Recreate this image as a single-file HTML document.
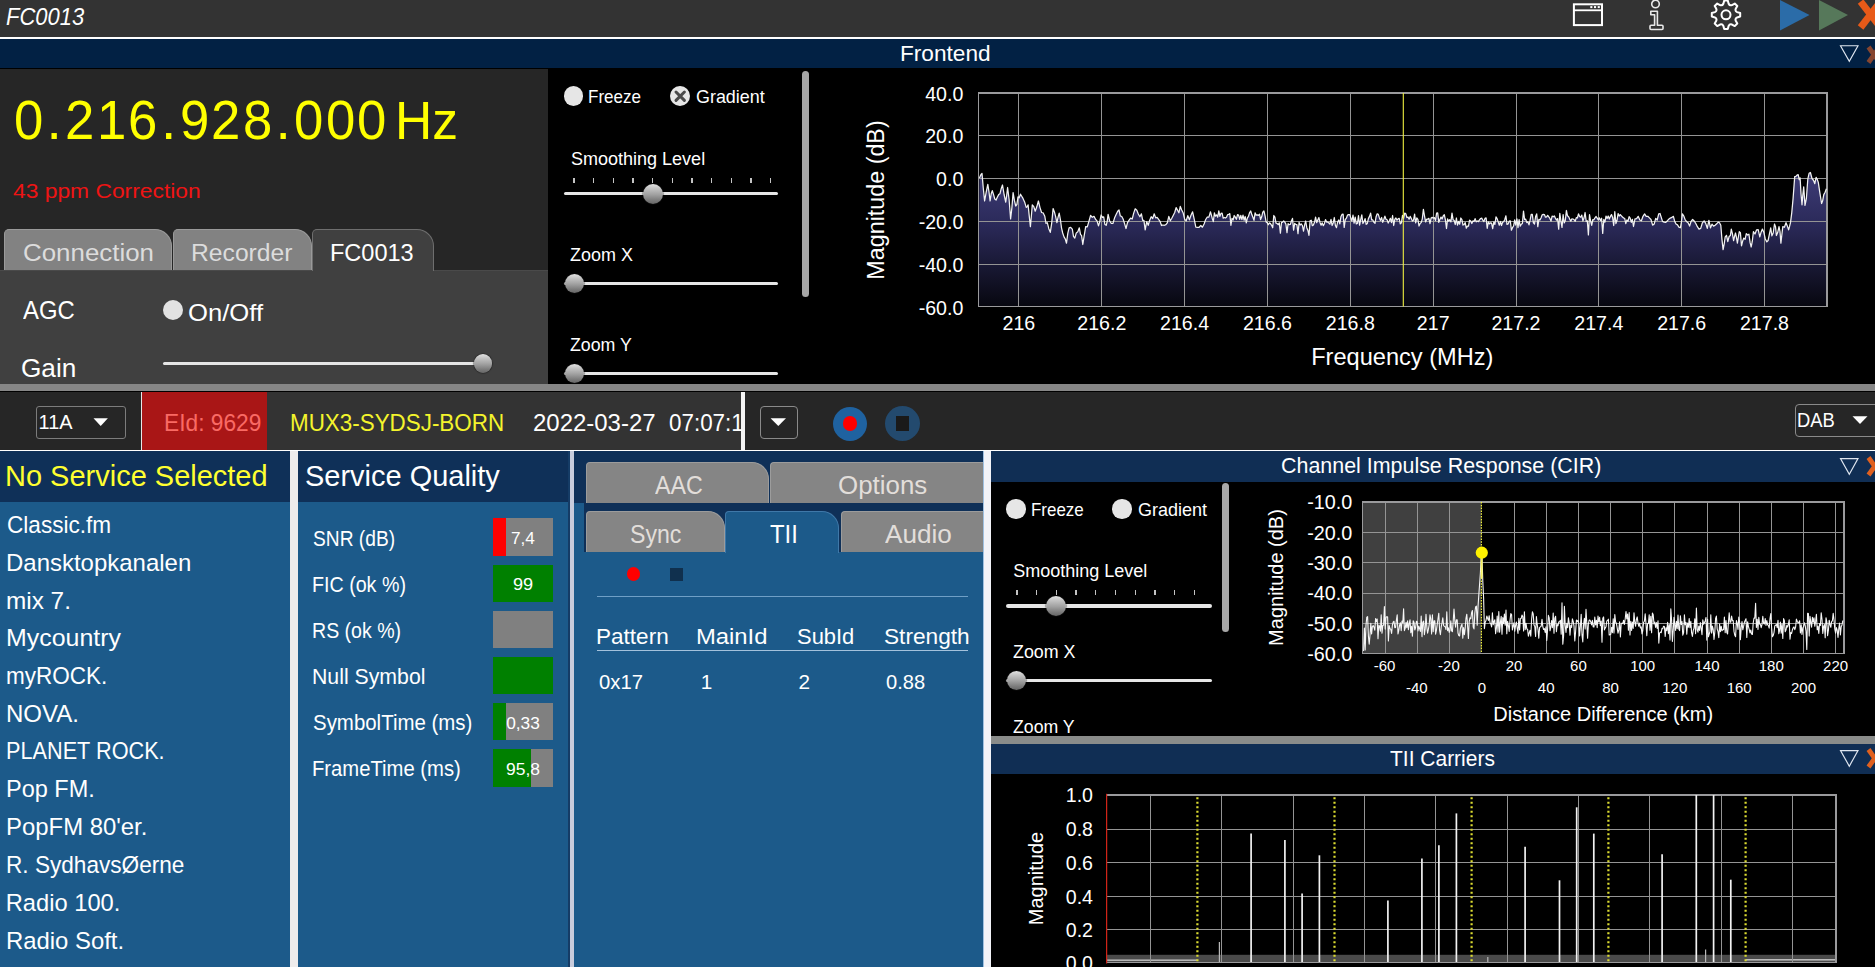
<!DOCTYPE html>
<html lang="en"><head><meta charset="utf-8"><title>FC0013</title>
<style>
html,body{margin:0;padding:0;background:#000;overflow:hidden;}
body{width:1875px;height:967px;position:relative;overflow:hidden;font-family:"Liberation Sans", sans-serif;}
.b{position:absolute;}
.t{position:absolute;white-space:nowrap;line-height:1;transform-origin:0 0;color:#fff;}
.fd{display:inline-block;width:31.45px;text-align:center;transform:scaleX(.955);}
.fp{display:inline-block;width:20.1px;text-align:center;}
svg text{font-family:"Liberation Sans", sans-serif;fill:#fff;}
</style></head><body>
<div class="b" style="left:0px;top:0px;width:1875px;height:38px;background:#333333;"></div>
<div class="b" style="left:0px;top:37px;width:1875px;height:2.1px;background:#ffffff;"></div>
<div class="b" style="left:0px;top:39.1px;width:1875px;height:29.4px;background:#022144;"></div>
<div class="b" style="left:0px;top:68.5px;width:548px;height:316px;background:#262626;"></div>
<div class="b" style="left:548px;top:68.5px;width:1327px;height:316px;background:#000;"></div>
<div class="b" style="left:0px;top:270px;width:548px;height:115px;background:#404040;border-top:1px solid #4a4a4a;"></div>
<div class="b" style="left:0px;top:383.8px;width:1875px;height:7.5px;background:#868686;"></div>
<div class="b" style="left:0px;top:391.5px;width:141px;height:58px;background:#262626;"></div>
<div class="b" style="left:141px;top:391.5px;width:1px;height:58px;background:#e8e8e8;"></div>
<div class="b" style="left:142px;top:391.5px;width:125px;height:58px;background:#a91616;"></div>
<div class="b" style="left:267px;top:391.5px;width:474px;height:58px;background:#333333;"></div>
<div class="b" style="left:741px;top:391.5px;width:4px;height:58px;background:#f4f4f4;"></div>
<div class="b" style="left:745px;top:391.5px;width:1130px;height:58px;background:#262626;"></div>
<div class="b" style="left:0px;top:449.5px;width:1875px;height:1.5px;background:#ffffff;"></div>
<div class="b" style="left:0px;top:451px;width:291px;height:516px;background:#1c5a8a;"></div>
<div class="b" style="left:0px;top:451px;width:291px;height:50.5px;background:#0f3058;"></div>
<div class="b" style="left:290.3px;top:451px;width:7.7px;height:516px;background:#eeecec;"></div>
<div class="b" style="left:298px;top:451px;width:271px;height:516px;background:#1c5a8a;"></div>
<div class="b" style="left:298px;top:451px;width:271px;height:50.5px;background:#0f3058;"></div>
<div class="b" style="left:568.2px;top:451px;width:1.6px;height:516px;background:#153c66;"></div>
<div class="b" style="left:569.8px;top:451px;width:4.3px;height:516px;background:#c8ccdc;"></div>
<div class="b" style="left:574.2px;top:451px;width:409px;height:516px;background:#1c5a8a;"></div>
<div class="b" style="left:574.2px;top:451px;width:409px;height:52px;background:#0f3058;"></div>
<div class="b" style="left:583.5px;top:451px;width:399.5px;height:101px;background:#0f3058;"></div>
<div class="b" style="left:983px;top:451px;width:8px;height:516px;background:#f2f3f8;border-left:1.5px solid #9fc0e0;box-sizing:border-box;"></div>
<div class="b" style="left:991px;top:451px;width:884px;height:516px;background:#000;"></div>
<div class="b" style="left:991px;top:451px;width:884px;height:30.5px;background:#102e54;"></div>
<div class="b" style="left:991px;top:735.5px;width:884px;height:8px;background:#8a8c8a;"></div>
<div class="b" style="left:991px;top:743.5px;width:884px;height:30px;background:#102e54;"></div>
<svg class="b" style="left:1560px;top:0" width="315" height="70" viewBox="1560 0 315 70">
<g fill="none" stroke="#fff" stroke-width="2">
<rect x="1573.9" y="4.3" width="28.1" height="20.8"/>
<line x1="1574" y1="10.3" x2="1602" y2="10.3" stroke-width="1.8"/>
</g>
<g fill="#fff"><rect x="1590.3" y="6.1" width="2.1" height="2"/><rect x="1594" y="6.1" width="2.1" height="2"/><rect x="1597.7" y="6.1" width="2.1" height="2"/></g>
<g fill="none" stroke="#e8e8e8" stroke-width="1.6" stroke-linejoin="round">
<circle cx="1655.5" cy="4" r="3.8"/>
<path d="M1650.8 11.2 h6.6 v14 h4.6 q1 0 1 1 v2.3 q0 1 -1 1 h-11 q-1 0 -1 -1 v-2.3 q0 -1 1 -1 h3.6 v-10.4 h-3.8 z"/>
</g>
<g transform="translate(1726 14.8)" fill="none" stroke="#fff" stroke-width="2" stroke-linejoin="round">
<circle r="4.5"/>
<path d="M-2.65 -11.09 L-1.78 -14.19 L1.78 -14.19 L2.65 -11.09 Q3.67 -8.87 5.96 -9.72 L8.77 -11.29 L11.29 -8.77 L9.72 -5.96 Q8.87 -3.67 11.09 -2.65 L14.19 -1.78 L14.19 1.78 L11.09 2.65 Q8.87 3.67 9.72 5.96 L11.29 8.77 L8.77 11.29 L5.96 9.72 Q3.67 8.87 2.65 11.09 L1.78 14.19 L-1.78 14.19 L-2.65 11.09 Q-3.67 8.87 -5.96 9.72 L-8.77 11.29 L-11.29 8.77 L-9.72 5.96 Q-8.87 3.67 -11.09 2.65 L-14.19 1.78 L-14.19 -1.78 L-11.09 -2.65 Q-8.87 -3.67 -9.72 -5.96 L-11.29 -8.77 L-8.77 -11.29 L-5.96 -9.72 Q-3.67 -8.87 -2.65 -11.09 Z"/>
</g>
<polygon points="1780,0 1809.5,15 1780,30.5" fill="#2b6ca8"/>
<polygon points="1819,0 1848,15 1819,30.5" fill="#56785a"/>
<g stroke="#e85a18" stroke-width="7"><line x1="1860.6" y1="1.5" x2="1880.6" y2="27.5"/><line x1="1860.6" y1="27.5" x2="1880.6" y2="1.5"/></g>
<polygon points="1840.5,45.7 1858,45.7 1849.3,61.3" fill="none" stroke="#dfe6f0" stroke-width="1.15"/>
<g stroke="#86452f" stroke-width="4.8"><line x1="1868.5" y1="47" x2="1879.5" y2="62.5"/><line x1="1868.5" y1="62.5" x2="1879.5" y2="47"/></g>
</svg>
<div class="b" style="left:4px;top:228.9px;width:167.7px;height:41.6px;background:#828282;border:1px solid #9a9a9a;border-bottom:none;border-radius:5px 17px 0 0;box-sizing:border-box;"></div>
<div class="b" style="left:172.5px;top:228.9px;width:139px;height:41.6px;background:#828282;border:1px solid #9a9a9a;border-bottom:none;border-radius:5px 17px 0 0;box-sizing:border-box;"></div>
<div class="b" style="left:312px;top:228.9px;width:121.7px;height:42.6px;background:#404040;border:1px solid #6e6e6e;border-bottom:none;border-radius:5px 17px 0 0;box-sizing:border-box;"></div>
<div class="b" style="left:163px;top:299.6px;width:20px;height:20px;background:#e2e2e2;border-radius:50%;"></div>
<div class="b" style="left:163px;top:361.59999999999997px;width:319px;height:3.6px;background:#e6e6e6;border-radius:2px;"></div><div class="b" style="left:473.5px;top:354.2px;width:18.4px;height:18.4px;border-radius:50%;background:linear-gradient(180deg,#e2e2e2 0%,#c4c4c4 22%,#a2a2a2 52%,#7a7a7a 82%,#666 100%);box-shadow:0 0 1px 0.5px rgba(20,20,20,.7);"></div>
<div class="b" style="left:563.7px;top:86px;width:19.6px;height:20px;background:#e6e6e6;border-radius:50%;"></div>
<div class="b" style="left:670.2px;top:86px;width:19.8px;height:20px;background:#e6e6e6;border-radius:50%;"></div>
<svg class="b" style="left:670px;top:86px" width="20" height="20"><g stroke="#4a4a4a" stroke-width="3" stroke-linecap="round"><line x1="6" y1="6" x2="14.4" y2="14.4"/><line x1="14.4" y1="6" x2="6" y2="14.4"/></g></svg>
<div class="b" style="left:573.4px;top:177.8px;width:1.4px;height:5.2px;background:#c4c4c4;"></div>
<div class="b" style="left:593.05px;top:177.8px;width:1.4px;height:5.2px;background:#c4c4c4;"></div>
<div class="b" style="left:612.6999999999999px;top:177.8px;width:1.4px;height:5.2px;background:#c4c4c4;"></div>
<div class="b" style="left:632.35px;top:177.8px;width:1.4px;height:5.2px;background:#c4c4c4;"></div>
<div class="b" style="left:652.0px;top:177.8px;width:1.4px;height:5.2px;background:#c4c4c4;"></div>
<div class="b" style="left:671.65px;top:177.8px;width:1.4px;height:5.2px;background:#c4c4c4;"></div>
<div class="b" style="left:691.3px;top:177.8px;width:1.4px;height:5.2px;background:#c4c4c4;"></div>
<div class="b" style="left:710.9499999999999px;top:177.8px;width:1.4px;height:5.2px;background:#c4c4c4;"></div>
<div class="b" style="left:730.5999999999999px;top:177.8px;width:1.4px;height:5.2px;background:#c4c4c4;"></div>
<div class="b" style="left:750.25px;top:177.8px;width:1.4px;height:5.2px;background:#c4c4c4;"></div>
<div class="b" style="left:769.9px;top:177.8px;width:1.4px;height:5.2px;background:#c4c4c4;"></div>
<div class="b" style="left:564px;top:191.79999999999998px;width:213.5px;height:3.6px;background:#e6e6e6;border-radius:2px;"></div><div class="b" style="left:642.7px;top:183.6px;width:20px;height:20px;border-radius:50%;background:linear-gradient(180deg,#e2e2e2 0%,#c4c4c4 22%,#a2a2a2 52%,#7a7a7a 82%,#666 100%);box-shadow:0 0 1px 0.5px rgba(20,20,20,.7);"></div>
<div class="b" style="left:564px;top:281.59999999999997px;width:213.5px;height:3.6px;background:#e6e6e6;border-radius:2px;"></div><div class="b" style="left:564.6999999999999px;top:273.79999999999995px;width:19.2px;height:19.2px;border-radius:50%;background:linear-gradient(180deg,#e2e2e2 0%,#c4c4c4 22%,#a2a2a2 52%,#7a7a7a 82%,#666 100%);box-shadow:0 0 1px 0.5px rgba(20,20,20,.7);"></div>
<div class="b" style="left:564px;top:371.5px;width:213.5px;height:3.6px;background:#e6e6e6;border-radius:2px;"></div><div class="b" style="left:564.6999999999999px;top:363.7px;width:19.2px;height:19.2px;border-radius:50%;background:linear-gradient(180deg,#e2e2e2 0%,#c4c4c4 22%,#a2a2a2 52%,#7a7a7a 82%,#666 100%);box-shadow:0 0 1px 0.5px rgba(20,20,20,.7);"></div>
<div class="b" style="left:801.8px;top:71px;width:7.5px;height:225.5px;background:#a6a6a6;border-radius:4px;"></div>
<div class="b" style="left:36.2px;top:406.3px;width:89.8px;height:32.5px;background:transparent;border:1px solid #7c7c7c;border-radius:3px;box-sizing:border-box;"></div>
<svg class="b" style="left:93px;top:418px" width="16" height="9"><polygon points="0.5,0.3 14.9,0.3 7.7,8" fill="#fff"/></svg>
<div class="b" style="left:760px;top:406.3px;width:38px;height:32.5px;background:transparent;border:1px solid #8a8a8a;border-radius:4px;box-sizing:border-box;"></div>
<svg class="b" style="left:770px;top:418px" width="17" height="9"><polygon points="0.6,0.3 16,0.3 8.3,8" fill="#fff"/></svg>
<div class="b" style="left:832.9px;top:406.6px;width:34px;height:34px;background:#1f62a0;border-radius:50%;"></div>
<div class="b" style="left:842.5px;top:416.2px;width:14.8px;height:14.8px;background:#ff0000;border-radius:50%;"></div>
<div class="b" style="left:884.9px;top:406.2px;width:35px;height:35px;background:#234a6e;border-radius:50%;"></div>
<div class="b" style="left:896px;top:415.7px;width:13.3px;height:15px;background:#1a1a1a;"></div>
<div class="b" style="left:1795.3px;top:404.3px;width:90px;height:32.3px;background:transparent;border:1px solid #8a8a8a;border-radius:4px;box-sizing:border-box;"></div>
<svg class="b" style="left:1851.5px;top:416px" width="17" height="9"><polygon points="0.5,0.3 15.5,0.3 8,8" fill="#fff"/></svg>
<div class="b" style="left:492.8px;top:518.4px;width:60.1px;height:37.2px;background:#808080;"></div>
<div class="b" style="left:492.8px;top:518.4px;width:13.4px;height:37.2px;background:#ff0000;"></div>
<div class="b" style="left:492.8px;top:564.6px;width:60.1px;height:37.2px;background:#808080;"></div>
<div class="b" style="left:492.8px;top:564.6px;width:60.1px;height:37.2px;background:#008000;"></div>
<div class="b" style="left:492.8px;top:610.8px;width:60.1px;height:37.2px;background:#808080;"></div>
<div class="b" style="left:492.8px;top:657.0px;width:60.1px;height:37.2px;background:#808080;"></div>
<div class="b" style="left:492.8px;top:657.0px;width:60.1px;height:37.2px;background:#008000;"></div>
<div class="b" style="left:492.8px;top:703.2px;width:60.1px;height:37.2px;background:#808080;"></div>
<div class="b" style="left:492.8px;top:703.2px;width:13px;height:37.2px;background:#008000;"></div>
<div class="b" style="left:492.8px;top:749.4px;width:60.1px;height:37.2px;background:#808080;"></div>
<div class="b" style="left:492.8px;top:749.4px;width:38.2px;height:37.2px;background:#008000;"></div>
<div class="b" style="left:585.9px;top:462.2px;width:183.3px;height:40.8px;background:#858585;border:1px solid #9c9c9c;border-bottom:none;border-radius:4px 17px 0 0;box-sizing:border-box;"></div>
<div class="b" style="left:770px;top:462.2px;width:213px;height:40.8px;background:#858585;border:1px solid #9c9c9c;border-bottom:none;border-radius:4px 0px 0 0;box-sizing:border-box;border-right:none;"></div>
<div class="b" style="left:585.9px;top:511px;width:139.3px;height:41px;background:#858585;border:1px solid #9c9c9c;border-bottom:none;border-radius:4px 17px 0 0;box-sizing:border-box;"></div>
<div class="b" style="left:840.5px;top:511px;width:142.5px;height:41px;background:#858585;border:1px solid #9c9c9c;border-bottom:none;border-radius:4px 0px 0 0;box-sizing:border-box;border-right:none;"></div>
<div class="b" style="left:725.2px;top:511px;width:114.2px;height:42px;background:#1c5a8a;border:1px solid #3f78a8;border-bottom:none;border-radius:4px 17px 0 0;box-sizing:border-box;"></div>
<div class="b" style="left:626.6px;top:567.2px;width:13.6px;height:13.6px;background:#ff0000;border-radius:50%;"></div>
<div class="b" style="left:670px;top:567.7px;width:13px;height:13px;background:#10304e;"></div>
<div class="b" style="left:597px;top:596.2px;width:371px;height:1px;background:#6f9fc6;"></div>
<div class="b" style="left:597px;top:650.1px;width:371px;height:1.2px;background:#a4c2dc;"></div>
<svg class="b" style="left:1830px;top:451px" width="45" height="330" viewBox="1830 451 45 330">
<polygon points="1840.5,458.6 1858,458.6 1849.3,474.2" fill="none" stroke="#dfe6f0" stroke-width="1.15"/>
<g stroke="#e0601e" stroke-width="4.8"><line x1="1868.5" y1="457.5" x2="1881" y2="475"/><line x1="1868.5" y1="475" x2="1881" y2="457.5"/></g>
<polygon points="1840.5,750.6 1858,750.6 1849.3,766.2" fill="none" stroke="#dfe6f0" stroke-width="1.15"/>
<g stroke="#e0601e" stroke-width="4.8"><line x1="1868.5" y1="749.5" x2="1881" y2="767"/><line x1="1868.5" y1="767" x2="1881" y2="749.5"/></g>
</svg>
<div class="b" style="left:1006.2px;top:499.1px;width:19.4px;height:19.6px;background:#e6e6e6;border-radius:50%;"></div>
<div class="b" style="left:1112.3px;top:499.1px;width:19.4px;height:19.6px;background:#e6e6e6;border-radius:50%;"></div>
<div class="b" style="left:1016.3px;top:589.8px;width:1.4px;height:5.2px;background:#c4c4c4;"></div>
<div class="b" style="left:1036.0px;top:589.8px;width:1.4px;height:5.2px;background:#c4c4c4;"></div>
<div class="b" style="left:1055.7px;top:589.8px;width:1.4px;height:5.2px;background:#c4c4c4;"></div>
<div class="b" style="left:1075.3999999999999px;top:589.8px;width:1.4px;height:5.2px;background:#c4c4c4;"></div>
<div class="b" style="left:1095.1px;top:589.8px;width:1.4px;height:5.2px;background:#c4c4c4;"></div>
<div class="b" style="left:1114.8px;top:589.8px;width:1.4px;height:5.2px;background:#c4c4c4;"></div>
<div class="b" style="left:1134.5px;top:589.8px;width:1.4px;height:5.2px;background:#c4c4c4;"></div>
<div class="b" style="left:1154.2px;top:589.8px;width:1.4px;height:5.2px;background:#c4c4c4;"></div>
<div class="b" style="left:1173.8999999999999px;top:589.8px;width:1.4px;height:5.2px;background:#c4c4c4;"></div>
<div class="b" style="left:1193.6px;top:589.8px;width:1.4px;height:5.2px;background:#c4c4c4;"></div>
<div class="b" style="left:1006.3px;top:604.0px;width:206.10000000000014px;height:3.6px;background:#e6e6e6;border-radius:2px;"></div><div class="b" style="left:1045.6px;top:595.8px;width:20px;height:20px;border-radius:50%;background:linear-gradient(180deg,#e2e2e2 0%,#c4c4c4 22%,#a2a2a2 52%,#7a7a7a 82%,#666 100%);box-shadow:0 0 1px 0.5px rgba(20,20,20,.7);"></div>
<div class="b" style="left:1006.3px;top:678.6px;width:206.10000000000014px;height:3.6px;background:#e6e6e6;border-radius:2px;"></div><div class="b" style="left:1006.6px;top:670.8px;width:19.2px;height:19.2px;border-radius:50%;background:linear-gradient(180deg,#e2e2e2 0%,#c4c4c4 22%,#a2a2a2 52%,#7a7a7a 82%,#666 100%);box-shadow:0 0 1px 0.5px rgba(20,20,20,.7);"></div>
<div class="b" style="left:1222px;top:483.3px;width:7px;height:148.4px;background:#a8a8a8;border-radius:4px;"></div>
<svg class="b" style="left:0;top:0" width="1875" height="967" viewBox="0 0 1875 967">
<defs><linearGradient id="fg" x1="0" y1="93" x2="0" y2="307" gradientUnits="userSpaceOnUse"><stop offset="0" stop-color="#6a6aa8"/><stop offset="0.4" stop-color="#3c3a74"/><stop offset="0.62" stop-color="#2a2958"/><stop offset="1" stop-color="#07070f"/></linearGradient></defs>
<polygon points="978.5,306.5 979.5,178.0 980.1,176.6 981.0,174.4 982.0,173.4 983.3,188.3 984.6,201.0 986.2,192.2 987.8,184.3 989.0,192.0 990.1,201.0 991.2,193.8 992.3,190.7 993.5,194.4 994.8,199.0 996.1,200.0 997.4,197.0 998.7,194.6 1000.0,193.7 1001.2,188.7 1002.5,185.0 1004.1,194.5 1005.7,202.2 1006.7,195.3 1007.6,187.5 1009.1,199.5 1010.6,218.9 1011.9,207.6 1013.1,192.6 1014.4,200.4 1015.7,206.0 1016.9,204.4 1018.0,196.8 1019.2,197.8 1020.5,194.2 1021.7,196.2 1023.0,198.4 1024.6,201.9 1026.2,207.4 1027.2,206.8 1028.1,204.8 1029.2,215.6 1030.4,226.6 1031.3,216.8 1032.3,204.8 1033.8,206.6 1035.2,211.2 1036.8,206.8 1038.4,201.0 1040.0,207.6 1041.6,212.5 1043.2,212.9 1044.8,216.3 1046.0,223.3 1047.3,222.7 1048.8,228.7 1050.3,232.3 1051.7,223.1 1053.1,208.6 1054.4,211.9 1055.6,216.4 1056.9,222.7 1058.1,217.1 1059.2,213.1 1060.4,219.5 1061.5,227.8 1062.7,233.0 1064.0,236.9 1065.2,238.8 1066.5,243.2 1067.8,233.4 1069.1,227.8 1070.7,227.3 1072.3,229.1 1073.5,236.3 1074.8,238.1 1076.3,232.9 1077.8,231.8 1079.3,227.8 1080.5,234.3 1081.6,235.7 1082.8,244.5 1084.2,235.7 1085.7,226.6 1087.3,226.9 1088.9,221.4 1090.6,215.3 1092.3,217.3 1094.0,216.3 1095.5,219.3 1097.0,220.9 1098.5,225.9 1099.8,221.5 1101.1,215.0 1102.4,217.4 1103.7,216.9 1104.9,224.5 1106.2,225.3 1107.2,221.3 1108.1,214.4 1109.7,221.0 1111.3,223.4 1112.9,223.5 1114.5,218.1 1116.1,214.5 1117.7,211.2 1119.0,210.0 1120.3,216.0 1121.6,216.3 1123.1,219.0 1124.5,223.4 1126.0,228.5 1127.5,222.6 1129.1,220.2 1130.6,218.1 1132.2,219.0 1133.7,213.1 1135.2,208.8 1136.8,210.2 1138.3,214.0 1139.9,216.8 1141.4,213.8 1142.7,220.4 1143.9,220.3 1145.2,229.8 1146.7,221.6 1148.2,225.3 1149.7,220.2 1151.2,216.7 1152.7,218.6 1154.2,213.8 1155.7,217.9 1157.1,217.4 1158.6,219.3 1160.0,221.3 1161.5,225.5 1162.9,225.0 1164.4,225.3 1165.9,224.6 1167.3,222.8 1168.8,216.4 1170.3,220.8 1171.8,218.3 1173.2,215.5 1174.7,212.5 1176.1,207.6 1177.5,210.1 1178.9,212.8 1180.3,206.4 1181.7,209.9 1183.2,213.1 1184.7,219.4 1186.2,220.8 1187.8,215.7 1189.4,219.8 1191.0,215.3 1192.6,211.8 1194.2,219.2 1195.8,227.2 1197.5,227.3 1199.1,227.3 1200.8,225.5 1202.4,227.2 1204.1,224.0 1205.7,219.5 1207.3,217.0 1208.9,217.1 1210.5,211.8 1212.2,218.2 1213.3,221.6 1214.4,212.9 1215.5,216.2 1216.6,214.8 1217.7,217.2 1218.8,210.8 1219.9,216.4 1221.0,213.4 1222.1,213.2 1223.2,218.1 1224.3,217.5 1225.4,218.0 1226.5,217.3 1227.6,214.7 1228.7,214.5 1229.8,213.6 1230.9,225.3 1232.0,218.4 1233.1,220.0 1234.2,215.5 1235.3,217.1 1236.4,219.3 1237.5,214.7 1238.6,215.1 1239.7,219.3 1240.8,215.4 1241.9,219.6 1243.0,215.1 1244.1,220.2 1245.2,216.5 1246.3,222.9 1247.4,217.8 1248.5,216.3 1249.6,212.6 1250.7,211.0 1251.8,214.6 1252.9,217.3 1254.0,220.4 1255.1,212.8 1256.2,215.2 1257.3,214.8 1258.4,215.4 1259.5,214.2 1260.6,219.5 1261.7,216.8 1262.8,212.2 1263.9,210.9 1265.0,215.6 1266.1,221.9 1267.2,222.6 1268.3,224.8 1269.4,222.9 1270.5,223.6 1271.6,225.3 1272.7,227.8 1273.8,215.5 1274.9,217.1 1276.0,223.1 1277.1,223.5 1278.2,224.7 1279.3,222.9 1280.4,233.2 1281.5,222.6 1282.6,222.2 1283.7,221.0 1284.8,222.1 1285.9,224.1 1287.0,232.7 1288.1,223.7 1289.2,224.7 1290.3,224.5 1291.4,221.0 1292.5,218.4 1293.6,230.2 1294.7,223.4 1295.8,224.4 1296.9,224.6 1298.0,233.6 1299.1,222.4 1300.2,225.0 1301.3,224.0 1302.4,225.5 1303.5,231.2 1304.6,225.2 1305.7,221.0 1306.8,227.7 1307.9,230.4 1309.0,235.3 1310.1,220.8 1311.2,220.2 1312.3,225.7 1313.4,224.9 1314.5,222.3 1315.6,217.2 1316.7,222.7 1317.8,219.9 1318.9,217.6 1320.0,222.4 1321.1,225.2 1322.2,222.8 1323.3,225.7 1324.4,223.7 1325.5,219.6 1326.6,222.1 1327.7,222.0 1328.8,222.9 1329.9,224.2 1331.0,219.3 1332.1,225.5 1333.2,223.1 1334.3,217.5 1335.4,225.5 1336.5,227.7 1337.6,222.0 1338.7,220.0 1339.8,223.9 1340.9,216.8 1342.0,214.4 1343.1,214.1 1344.2,227.4 1345.3,219.5 1346.4,218.2 1347.5,215.1 1348.6,214.6 1349.7,214.6 1350.8,217.9 1351.9,221.0 1353.0,215.2 1354.1,223.1 1355.2,217.1 1356.3,223.8 1357.4,223.5 1358.5,215.7 1359.6,225.1 1360.7,219.6 1361.8,214.8 1362.9,223.5 1364.0,221.7 1365.1,218.6 1366.2,224.3 1367.3,223.4 1368.4,218.6 1369.5,216.4 1370.6,213.2 1371.7,219.9 1372.8,219.9 1373.9,222.3 1375.0,223.3 1376.1,216.7 1377.2,213.8 1378.3,214.4 1379.4,217.9 1380.5,220.4 1381.6,217.5 1382.7,222.3 1383.8,219.5 1384.9,216.1 1386.0,219.2 1387.1,219.8 1388.2,223.1 1389.3,220.8 1390.4,218.3 1391.5,222.6 1392.6,215.5 1393.7,225.5 1394.8,219.4 1395.9,217.9 1397.0,220.2 1398.1,218.8 1399.2,218.3 1400.3,223.8 1401.4,222.8 1402.5,215.4 1403.6,218.3 1404.7,213.1 1405.8,213.8 1406.9,217.5 1408.0,217.1 1409.1,219.2 1410.2,216.4 1411.3,218.5 1412.4,221.0 1413.5,220.3 1414.6,214.1 1415.7,222.8 1416.8,217.9 1417.9,219.3 1419.0,226.0 1420.1,223.4 1421.2,222.6 1422.3,218.8 1423.4,209.3 1424.5,215.9 1425.6,221.9 1426.7,219.2 1427.8,219.2 1428.9,218.3 1430.0,223.7 1431.1,218.1 1432.2,217.4 1433.3,218.1 1434.4,217.6 1435.5,220.6 1436.6,213.2 1437.7,212.9 1438.8,222.4 1439.9,219.4 1441.0,217.1 1442.1,219.0 1443.2,216.0 1444.3,214.7 1445.4,219.9 1446.5,228.5 1447.6,218.9 1448.7,221.2 1449.8,219.7 1450.9,221.9 1452.0,213.2 1453.1,219.8 1454.2,220.5 1455.3,224.5 1456.4,218.0 1457.5,225.2 1458.6,221.4 1459.7,224.2 1460.8,218.0 1461.9,219.7 1463.0,225.0 1464.1,224.6 1465.2,222.6 1466.3,228.2 1467.4,226.1 1468.5,226.1 1469.6,220.2 1470.7,221.1 1471.8,223.5 1472.9,220.9 1474.0,221.5 1475.1,218.6 1476.2,221.8 1477.3,221.0 1478.4,221.6 1479.5,219.8 1480.6,218.5 1481.7,218.1 1482.8,220.2 1483.9,221.6 1485.0,218.4 1486.1,217.9 1487.2,228.3 1488.3,221.9 1489.4,223.9 1490.5,222.8 1491.6,223.2 1492.7,228.6 1493.8,222.0 1494.9,224.4 1496.0,216.9 1497.1,218.6 1498.2,221.9 1499.3,225.2 1500.4,221.5 1501.5,225.5 1502.6,222.3 1503.7,221.8 1504.8,219.5 1505.9,215.8 1507.0,224.3 1508.1,223.9 1509.2,221.2 1510.3,220.9 1511.4,230.2 1512.5,227.7 1513.6,226.0 1514.7,219.8 1515.8,225.0 1516.9,218.8 1518.0,227.7 1519.1,219.6 1520.2,226.2 1521.3,224.2 1522.4,223.4 1523.5,211.1 1524.6,219.5 1525.7,219.2 1526.8,222.6 1527.9,221.9 1529.0,224.8 1530.1,220.2 1531.2,214.3 1532.3,214.4 1533.4,222.9 1534.5,224.0 1535.6,216.6 1536.7,213.9 1537.8,226.6 1538.9,219.4 1540.0,219.9 1541.1,217.7 1542.2,214.8 1543.3,214.4 1544.4,214.6 1545.5,217.2 1546.6,216.9 1547.7,215.3 1548.8,216.8 1549.9,218.4 1551.0,221.1 1552.1,216.1 1553.2,216.8 1554.3,215.9 1555.4,218.1 1556.5,220.1 1557.6,218.6 1558.7,229.2 1559.8,213.3 1560.9,221.2 1562.0,227.4 1563.1,214.7 1564.2,222.9 1565.3,220.5 1566.4,210.5 1567.5,215.8 1568.6,216.7 1569.7,219.1 1570.8,221.1 1571.9,218.9 1573.0,219.0 1574.1,219.7 1575.2,221.3 1576.3,217.6 1577.4,218.0 1578.5,213.8 1579.6,216.5 1580.7,217.2 1581.8,215.1 1582.9,221.0 1584.0,218.0 1585.1,212.5 1586.2,221.3 1587.3,220.7 1588.4,234.9 1589.5,214.7 1590.6,220.8 1591.7,225.3 1592.8,219.7 1593.9,219.8 1595.0,217.8 1596.1,216.5 1597.2,218.2 1598.3,220.0 1599.4,217.9 1600.5,220.6 1601.6,218.2 1602.7,233.4 1603.8,219.5 1604.9,222.2 1606.0,216.1 1607.1,218.5 1608.2,216.0 1609.3,219.0 1610.4,216.4 1611.5,214.6 1612.6,217.4 1613.7,225.5 1614.8,211.7 1615.9,223.6 1617.0,220.3 1618.1,213.6 1619.2,216.0 1620.3,214.6 1621.4,215.8 1622.5,217.0 1623.6,218.0 1624.7,218.4 1625.8,223.6 1626.9,220.0 1628.0,221.4 1629.1,216.7 1630.2,218.1 1631.3,222.4 1632.4,219.3 1633.5,226.5 1635.0,218.9 1636.6,218.6 1638.2,216.3 1639.8,220.0 1641.4,220.8 1643.0,216.3 1644.6,213.9 1646.2,216.3 1647.8,216.3 1649.4,217.9 1651.0,219.5 1652.6,225.2 1654.2,224.0 1655.7,218.3 1657.2,220.0 1658.7,213.8 1660.0,213.5 1661.2,217.1 1662.5,221.4 1664.1,222.1 1665.6,222.4 1667.2,221.1 1668.7,219.2 1670.3,218.1 1671.8,217.4 1673.4,216.3 1674.7,221.4 1676.0,224.0 1677.5,224.9 1678.9,227.1 1680.4,227.8 1681.4,222.1 1682.4,213.8 1683.8,216.0 1685.2,219.9 1686.7,221.7 1688.1,222.7 1689.6,226.1 1691.1,221.3 1692.6,219.5 1694.2,221.0 1695.8,223.5 1697.4,226.7 1699.0,229.1 1700.7,228.4 1702.4,222.8 1704.1,220.8 1705.7,223.4 1707.3,228.3 1708.9,220.4 1710.5,227.8 1712.0,224.2 1713.6,226.1 1715.1,225.3 1716.7,223.8 1718.2,222.1 1719.5,222.8 1720.8,225.3 1721.9,238.9 1723.1,249.6 1724.2,243.8 1725.2,236.8 1726.5,235.3 1727.8,241.5 1729.1,236.6 1730.4,235.5 1731.3,229.1 1732.4,233.6 1733.6,240.6 1734.5,236.6 1735.5,233.0 1736.5,237.6 1737.4,243.2 1738.3,237.3 1739.3,231.7 1740.4,232.7 1741.5,245.8 1742.7,240.9 1743.8,238.1 1745.1,239.3 1746.3,233.6 1747.6,235.0 1748.9,234.2 1750.1,242.7 1751.2,247.0 1752.3,241.2 1753.4,231.7 1755.0,234.0 1756.6,229.8 1758.2,229.6 1759.8,236.8 1761.1,232.2 1762.4,229.1 1763.9,232.6 1765.3,239.0 1766.8,241.9 1768.1,240.5 1769.4,234.2 1770.7,227.9 1771.9,235.8 1773.2,233.0 1774.5,224.0 1775.5,226.6 1776.4,235.5 1777.7,232.6 1779.0,226.6 1780.0,231.6 1780.9,243.2 1781.8,235.3 1782.8,226.6 1784.4,227.3 1786.0,222.7 1787.3,225.9 1788.6,229.8 1789.5,226.7 1790.5,222.7 1791.8,212.3 1793.1,198.4 1794.7,176.6 1795.9,176.3 1797.0,175.1 1798.2,174.7 1799.2,179.7 1800.1,177.9 1801.0,193.7 1802.0,204.8 1802.8,195.2 1803.7,186.9 1805.0,205.4 1806.4,198.3 1807.8,179.2 1809.1,173.3 1810.4,172.5 1812.0,178.5 1813.6,180.5 1814.8,183.7 1816.1,177.3 1817.2,179.3 1818.3,182.4 1819.9,193.2 1821.6,203.5 1822.7,200.6 1823.8,194.6 1825.1,192.2 1826.4,188.8 1827,306.5" fill="url(#fg)"/>
<g stroke="#949494" stroke-width="1" shape-rendering="crispEdges"><line x1="978.5" y1="135.8" x2="1827" y2="135.8"/><line x1="978.5" y1="178.6" x2="1827" y2="178.6"/><line x1="978.5" y1="221.4" x2="1827" y2="221.4"/><line x1="978.5" y1="264.2" x2="1827" y2="264.2"/><line x1="1018.9" y1="93" x2="1018.9" y2="306.5"/><line x1="1101.8" y1="93" x2="1101.8" y2="306.5"/><line x1="1184.6" y1="93" x2="1184.6" y2="306.5"/><line x1="1267.5" y1="93" x2="1267.5" y2="306.5"/><line x1="1350.3" y1="93" x2="1350.3" y2="306.5"/><line x1="1433.2" y1="93" x2="1433.2" y2="306.5"/><line x1="1516.0" y1="93" x2="1516.0" y2="306.5"/><line x1="1598.8" y1="93" x2="1598.8" y2="306.5"/><line x1="1681.7" y1="93" x2="1681.7" y2="306.5"/><line x1="1764.5" y1="93" x2="1764.5" y2="306.5"/></g>
<g stroke="#9a9a9c" shape-rendering="crispEdges"><line x1="978.0" y1="93" x2="1828" y2="93" stroke-width="2"/><line x1="1827" y1="93" x2="1827" y2="307.0" stroke-width="2"/><line x1="978.0" y1="306.5" x2="1827" y2="306.5" stroke-width="1"/><line x1="978.5" y1="93" x2="978.5" y2="307.0" stroke-width="1"/></g>
<polyline points="979.5,178.0 980.1,176.6 981.0,174.4 982.0,173.4 983.3,188.3 984.6,201.0 986.2,192.2 987.8,184.3 989.0,192.0 990.1,201.0 991.2,193.8 992.3,190.7 993.5,194.4 994.8,199.0 996.1,200.0 997.4,197.0 998.7,194.6 1000.0,193.7 1001.2,188.7 1002.5,185.0 1004.1,194.5 1005.7,202.2 1006.7,195.3 1007.6,187.5 1009.1,199.5 1010.6,218.9 1011.9,207.6 1013.1,192.6 1014.4,200.4 1015.7,206.0 1016.9,204.4 1018.0,196.8 1019.2,197.8 1020.5,194.2 1021.7,196.2 1023.0,198.4 1024.6,201.9 1026.2,207.4 1027.2,206.8 1028.1,204.8 1029.2,215.6 1030.4,226.6 1031.3,216.8 1032.3,204.8 1033.8,206.6 1035.2,211.2 1036.8,206.8 1038.4,201.0 1040.0,207.6 1041.6,212.5 1043.2,212.9 1044.8,216.3 1046.0,223.3 1047.3,222.7 1048.8,228.7 1050.3,232.3 1051.7,223.1 1053.1,208.6 1054.4,211.9 1055.6,216.4 1056.9,222.7 1058.1,217.1 1059.2,213.1 1060.4,219.5 1061.5,227.8 1062.7,233.0 1064.0,236.9 1065.2,238.8 1066.5,243.2 1067.8,233.4 1069.1,227.8 1070.7,227.3 1072.3,229.1 1073.5,236.3 1074.8,238.1 1076.3,232.9 1077.8,231.8 1079.3,227.8 1080.5,234.3 1081.6,235.7 1082.8,244.5 1084.2,235.7 1085.7,226.6 1087.3,226.9 1088.9,221.4 1090.6,215.3 1092.3,217.3 1094.0,216.3 1095.5,219.3 1097.0,220.9 1098.5,225.9 1099.8,221.5 1101.1,215.0 1102.4,217.4 1103.7,216.9 1104.9,224.5 1106.2,225.3 1107.2,221.3 1108.1,214.4 1109.7,221.0 1111.3,223.4 1112.9,223.5 1114.5,218.1 1116.1,214.5 1117.7,211.2 1119.0,210.0 1120.3,216.0 1121.6,216.3 1123.1,219.0 1124.5,223.4 1126.0,228.5 1127.5,222.6 1129.1,220.2 1130.6,218.1 1132.2,219.0 1133.7,213.1 1135.2,208.8 1136.8,210.2 1138.3,214.0 1139.9,216.8 1141.4,213.8 1142.7,220.4 1143.9,220.3 1145.2,229.8 1146.7,221.6 1148.2,225.3 1149.7,220.2 1151.2,216.7 1152.7,218.6 1154.2,213.8 1155.7,217.9 1157.1,217.4 1158.6,219.3 1160.0,221.3 1161.5,225.5 1162.9,225.0 1164.4,225.3 1165.9,224.6 1167.3,222.8 1168.8,216.4 1170.3,220.8 1171.8,218.3 1173.2,215.5 1174.7,212.5 1176.1,207.6 1177.5,210.1 1178.9,212.8 1180.3,206.4 1181.7,209.9 1183.2,213.1 1184.7,219.4 1186.2,220.8 1187.8,215.7 1189.4,219.8 1191.0,215.3 1192.6,211.8 1194.2,219.2 1195.8,227.2 1197.5,227.3 1199.1,227.3 1200.8,225.5 1202.4,227.2 1204.1,224.0 1205.7,219.5 1207.3,217.0 1208.9,217.1 1210.5,211.8 1212.2,218.2 1213.3,221.6 1214.4,212.9 1215.5,216.2 1216.6,214.8 1217.7,217.2 1218.8,210.8 1219.9,216.4 1221.0,213.4 1222.1,213.2 1223.2,218.1 1224.3,217.5 1225.4,218.0 1226.5,217.3 1227.6,214.7 1228.7,214.5 1229.8,213.6 1230.9,225.3 1232.0,218.4 1233.1,220.0 1234.2,215.5 1235.3,217.1 1236.4,219.3 1237.5,214.7 1238.6,215.1 1239.7,219.3 1240.8,215.4 1241.9,219.6 1243.0,215.1 1244.1,220.2 1245.2,216.5 1246.3,222.9 1247.4,217.8 1248.5,216.3 1249.6,212.6 1250.7,211.0 1251.8,214.6 1252.9,217.3 1254.0,220.4 1255.1,212.8 1256.2,215.2 1257.3,214.8 1258.4,215.4 1259.5,214.2 1260.6,219.5 1261.7,216.8 1262.8,212.2 1263.9,210.9 1265.0,215.6 1266.1,221.9 1267.2,222.6 1268.3,224.8 1269.4,222.9 1270.5,223.6 1271.6,225.3 1272.7,227.8 1273.8,215.5 1274.9,217.1 1276.0,223.1 1277.1,223.5 1278.2,224.7 1279.3,222.9 1280.4,233.2 1281.5,222.6 1282.6,222.2 1283.7,221.0 1284.8,222.1 1285.9,224.1 1287.0,232.7 1288.1,223.7 1289.2,224.7 1290.3,224.5 1291.4,221.0 1292.5,218.4 1293.6,230.2 1294.7,223.4 1295.8,224.4 1296.9,224.6 1298.0,233.6 1299.1,222.4 1300.2,225.0 1301.3,224.0 1302.4,225.5 1303.5,231.2 1304.6,225.2 1305.7,221.0 1306.8,227.7 1307.9,230.4 1309.0,235.3 1310.1,220.8 1311.2,220.2 1312.3,225.7 1313.4,224.9 1314.5,222.3 1315.6,217.2 1316.7,222.7 1317.8,219.9 1318.9,217.6 1320.0,222.4 1321.1,225.2 1322.2,222.8 1323.3,225.7 1324.4,223.7 1325.5,219.6 1326.6,222.1 1327.7,222.0 1328.8,222.9 1329.9,224.2 1331.0,219.3 1332.1,225.5 1333.2,223.1 1334.3,217.5 1335.4,225.5 1336.5,227.7 1337.6,222.0 1338.7,220.0 1339.8,223.9 1340.9,216.8 1342.0,214.4 1343.1,214.1 1344.2,227.4 1345.3,219.5 1346.4,218.2 1347.5,215.1 1348.6,214.6 1349.7,214.6 1350.8,217.9 1351.9,221.0 1353.0,215.2 1354.1,223.1 1355.2,217.1 1356.3,223.8 1357.4,223.5 1358.5,215.7 1359.6,225.1 1360.7,219.6 1361.8,214.8 1362.9,223.5 1364.0,221.7 1365.1,218.6 1366.2,224.3 1367.3,223.4 1368.4,218.6 1369.5,216.4 1370.6,213.2 1371.7,219.9 1372.8,219.9 1373.9,222.3 1375.0,223.3 1376.1,216.7 1377.2,213.8 1378.3,214.4 1379.4,217.9 1380.5,220.4 1381.6,217.5 1382.7,222.3 1383.8,219.5 1384.9,216.1 1386.0,219.2 1387.1,219.8 1388.2,223.1 1389.3,220.8 1390.4,218.3 1391.5,222.6 1392.6,215.5 1393.7,225.5 1394.8,219.4 1395.9,217.9 1397.0,220.2 1398.1,218.8 1399.2,218.3 1400.3,223.8 1401.4,222.8 1402.5,215.4 1403.6,218.3 1404.7,213.1 1405.8,213.8 1406.9,217.5 1408.0,217.1 1409.1,219.2 1410.2,216.4 1411.3,218.5 1412.4,221.0 1413.5,220.3 1414.6,214.1 1415.7,222.8 1416.8,217.9 1417.9,219.3 1419.0,226.0 1420.1,223.4 1421.2,222.6 1422.3,218.8 1423.4,209.3 1424.5,215.9 1425.6,221.9 1426.7,219.2 1427.8,219.2 1428.9,218.3 1430.0,223.7 1431.1,218.1 1432.2,217.4 1433.3,218.1 1434.4,217.6 1435.5,220.6 1436.6,213.2 1437.7,212.9 1438.8,222.4 1439.9,219.4 1441.0,217.1 1442.1,219.0 1443.2,216.0 1444.3,214.7 1445.4,219.9 1446.5,228.5 1447.6,218.9 1448.7,221.2 1449.8,219.7 1450.9,221.9 1452.0,213.2 1453.1,219.8 1454.2,220.5 1455.3,224.5 1456.4,218.0 1457.5,225.2 1458.6,221.4 1459.7,224.2 1460.8,218.0 1461.9,219.7 1463.0,225.0 1464.1,224.6 1465.2,222.6 1466.3,228.2 1467.4,226.1 1468.5,226.1 1469.6,220.2 1470.7,221.1 1471.8,223.5 1472.9,220.9 1474.0,221.5 1475.1,218.6 1476.2,221.8 1477.3,221.0 1478.4,221.6 1479.5,219.8 1480.6,218.5 1481.7,218.1 1482.8,220.2 1483.9,221.6 1485.0,218.4 1486.1,217.9 1487.2,228.3 1488.3,221.9 1489.4,223.9 1490.5,222.8 1491.6,223.2 1492.7,228.6 1493.8,222.0 1494.9,224.4 1496.0,216.9 1497.1,218.6 1498.2,221.9 1499.3,225.2 1500.4,221.5 1501.5,225.5 1502.6,222.3 1503.7,221.8 1504.8,219.5 1505.9,215.8 1507.0,224.3 1508.1,223.9 1509.2,221.2 1510.3,220.9 1511.4,230.2 1512.5,227.7 1513.6,226.0 1514.7,219.8 1515.8,225.0 1516.9,218.8 1518.0,227.7 1519.1,219.6 1520.2,226.2 1521.3,224.2 1522.4,223.4 1523.5,211.1 1524.6,219.5 1525.7,219.2 1526.8,222.6 1527.9,221.9 1529.0,224.8 1530.1,220.2 1531.2,214.3 1532.3,214.4 1533.4,222.9 1534.5,224.0 1535.6,216.6 1536.7,213.9 1537.8,226.6 1538.9,219.4 1540.0,219.9 1541.1,217.7 1542.2,214.8 1543.3,214.4 1544.4,214.6 1545.5,217.2 1546.6,216.9 1547.7,215.3 1548.8,216.8 1549.9,218.4 1551.0,221.1 1552.1,216.1 1553.2,216.8 1554.3,215.9 1555.4,218.1 1556.5,220.1 1557.6,218.6 1558.7,229.2 1559.8,213.3 1560.9,221.2 1562.0,227.4 1563.1,214.7 1564.2,222.9 1565.3,220.5 1566.4,210.5 1567.5,215.8 1568.6,216.7 1569.7,219.1 1570.8,221.1 1571.9,218.9 1573.0,219.0 1574.1,219.7 1575.2,221.3 1576.3,217.6 1577.4,218.0 1578.5,213.8 1579.6,216.5 1580.7,217.2 1581.8,215.1 1582.9,221.0 1584.0,218.0 1585.1,212.5 1586.2,221.3 1587.3,220.7 1588.4,234.9 1589.5,214.7 1590.6,220.8 1591.7,225.3 1592.8,219.7 1593.9,219.8 1595.0,217.8 1596.1,216.5 1597.2,218.2 1598.3,220.0 1599.4,217.9 1600.5,220.6 1601.6,218.2 1602.7,233.4 1603.8,219.5 1604.9,222.2 1606.0,216.1 1607.1,218.5 1608.2,216.0 1609.3,219.0 1610.4,216.4 1611.5,214.6 1612.6,217.4 1613.7,225.5 1614.8,211.7 1615.9,223.6 1617.0,220.3 1618.1,213.6 1619.2,216.0 1620.3,214.6 1621.4,215.8 1622.5,217.0 1623.6,218.0 1624.7,218.4 1625.8,223.6 1626.9,220.0 1628.0,221.4 1629.1,216.7 1630.2,218.1 1631.3,222.4 1632.4,219.3 1633.5,226.5 1635.0,218.9 1636.6,218.6 1638.2,216.3 1639.8,220.0 1641.4,220.8 1643.0,216.3 1644.6,213.9 1646.2,216.3 1647.8,216.3 1649.4,217.9 1651.0,219.5 1652.6,225.2 1654.2,224.0 1655.7,218.3 1657.2,220.0 1658.7,213.8 1660.0,213.5 1661.2,217.1 1662.5,221.4 1664.1,222.1 1665.6,222.4 1667.2,221.1 1668.7,219.2 1670.3,218.1 1671.8,217.4 1673.4,216.3 1674.7,221.4 1676.0,224.0 1677.5,224.9 1678.9,227.1 1680.4,227.8 1681.4,222.1 1682.4,213.8 1683.8,216.0 1685.2,219.9 1686.7,221.7 1688.1,222.7 1689.6,226.1 1691.1,221.3 1692.6,219.5 1694.2,221.0 1695.8,223.5 1697.4,226.7 1699.0,229.1 1700.7,228.4 1702.4,222.8 1704.1,220.8 1705.7,223.4 1707.3,228.3 1708.9,220.4 1710.5,227.8 1712.0,224.2 1713.6,226.1 1715.1,225.3 1716.7,223.8 1718.2,222.1 1719.5,222.8 1720.8,225.3 1721.9,238.9 1723.1,249.6 1724.2,243.8 1725.2,236.8 1726.5,235.3 1727.8,241.5 1729.1,236.6 1730.4,235.5 1731.3,229.1 1732.4,233.6 1733.6,240.6 1734.5,236.6 1735.5,233.0 1736.5,237.6 1737.4,243.2 1738.3,237.3 1739.3,231.7 1740.4,232.7 1741.5,245.8 1742.7,240.9 1743.8,238.1 1745.1,239.3 1746.3,233.6 1747.6,235.0 1748.9,234.2 1750.1,242.7 1751.2,247.0 1752.3,241.2 1753.4,231.7 1755.0,234.0 1756.6,229.8 1758.2,229.6 1759.8,236.8 1761.1,232.2 1762.4,229.1 1763.9,232.6 1765.3,239.0 1766.8,241.9 1768.1,240.5 1769.4,234.2 1770.7,227.9 1771.9,235.8 1773.2,233.0 1774.5,224.0 1775.5,226.6 1776.4,235.5 1777.7,232.6 1779.0,226.6 1780.0,231.6 1780.9,243.2 1781.8,235.3 1782.8,226.6 1784.4,227.3 1786.0,222.7 1787.3,225.9 1788.6,229.8 1789.5,226.7 1790.5,222.7 1791.8,212.3 1793.1,198.4 1794.7,176.6 1795.9,176.3 1797.0,175.1 1798.2,174.7 1799.2,179.7 1800.1,177.9 1801.0,193.7 1802.0,204.8 1802.8,195.2 1803.7,186.9 1805.0,205.4 1806.4,198.3 1807.8,179.2 1809.1,173.3 1810.4,172.5 1812.0,178.5 1813.6,180.5 1814.8,183.7 1816.1,177.3 1817.2,179.3 1818.3,182.4 1819.9,193.2 1821.6,203.5 1822.7,200.6 1823.8,194.6 1825.1,192.2 1826.4,188.8" fill="none" stroke="#f2f2f2" stroke-width="1.25" stroke-linejoin="round"/>
<line x1="1403.3" y1="93" x2="1403.3" y2="306.5" stroke="#f0f040" stroke-width="1.1"/>
<text x="963.3" y="100.5" font-size="19.6" text-anchor="end">40.0</text>
<text x="963.3" y="143.3" font-size="19.6" text-anchor="end">20.0</text>
<text x="963.3" y="186.1" font-size="19.6" text-anchor="end">0.0</text>
<text x="963.3" y="228.9" font-size="19.6" text-anchor="end">-20.0</text>
<text x="963.3" y="271.7" font-size="19.6" text-anchor="end">-40.0</text>
<text x="963.3" y="314.5" font-size="19.6" text-anchor="end">-60.0</text>
<text x="1018.9" y="329.8" font-size="19.6" text-anchor="middle">216</text>
<text x="1101.8" y="329.8" font-size="19.6" text-anchor="middle">216.2</text>
<text x="1184.6" y="329.8" font-size="19.6" text-anchor="middle">216.4</text>
<text x="1267.5" y="329.8" font-size="19.6" text-anchor="middle">216.6</text>
<text x="1350.3" y="329.8" font-size="19.6" text-anchor="middle">216.8</text>
<text x="1433.2" y="329.8" font-size="19.6" text-anchor="middle">217</text>
<text x="1516.0" y="329.8" font-size="19.6" text-anchor="middle">217.2</text>
<text x="1598.8" y="329.8" font-size="19.6" text-anchor="middle">217.4</text>
<text x="1681.7" y="329.8" font-size="19.6" text-anchor="middle">217.6</text>
<text x="1764.5" y="329.8" font-size="19.6" text-anchor="middle">217.8</text>
<text x="1402.3" y="365.2" font-size="23.6" text-anchor="middle">Frequency (MHz)</text>
<text transform="translate(883.6 200) rotate(-90)" font-size="23.3" text-anchor="middle">Magnitude (dB)</text>
<rect x="1362.6" y="502" width="118.60000000000014" height="151.29999999999995" fill="#404040"/>
<g stroke="#949494" stroke-width="1" shape-rendering="crispEdges"><line x1="1362.6" y1="532.4" x2="1844" y2="532.4"/><line x1="1362.6" y1="562.7" x2="1844" y2="562.7"/><line x1="1362.6" y1="593.1" x2="1844" y2="593.1"/><line x1="1362.6" y1="623.4" x2="1844" y2="623.4"/><line x1="1385.4" y1="502" x2="1385.4" y2="653.3"/><line x1="1417.6" y1="502" x2="1417.6" y2="653.3"/><line x1="1449.7" y1="502" x2="1449.7" y2="653.3"/><line x1="1514.1" y1="502" x2="1514.1" y2="653.3"/><line x1="1546.2" y1="502" x2="1546.2" y2="653.3"/><line x1="1578.4" y1="502" x2="1578.4" y2="653.3"/><line x1="1610.5" y1="502" x2="1610.5" y2="653.3"/><line x1="1642.7" y1="502" x2="1642.7" y2="653.3"/><line x1="1674.8" y1="502" x2="1674.8" y2="653.3"/><line x1="1707.0" y1="502" x2="1707.0" y2="653.3"/><line x1="1739.2" y1="502" x2="1739.2" y2="653.3"/><line x1="1771.3" y1="502" x2="1771.3" y2="653.3"/><line x1="1803.5" y1="502" x2="1803.5" y2="653.3"/><line x1="1835.6" y1="502" x2="1835.6" y2="653.3"/></g>
<g stroke="#9a9a9c" shape-rendering="crispEdges"><line x1="1362.1" y1="502" x2="1845" y2="502" stroke-width="2"/><line x1="1844" y1="502" x2="1844" y2="653.8" stroke-width="2"/><line x1="1362.1" y1="653.3" x2="1844" y2="653.3" stroke-width="1"/><line x1="1362.6" y1="502" x2="1362.6" y2="653.8" stroke-width="1"/></g>
<polyline points="1363.6,651.0 1364.4,628.0 1365.2,650.0 1366.0,625.0 1366.8,617.1 1367.6,616.6 1368.4,636.1 1369.2,644.1 1370.0,635.3 1370.8,623.3 1371.6,633.9 1372.4,626.3 1373.2,625.6 1374.0,627.2 1374.8,630.1 1375.6,618.5 1376.4,621.5 1377.2,619.0 1378.0,638.7 1378.8,625.1 1379.6,626.2 1380.4,631.2 1381.2,614.7 1382.0,633.3 1382.8,625.6 1383.6,625.3 1384.4,606.5 1385.2,629.1 1386.0,617.3 1386.8,616.8 1387.6,616.7 1388.4,641.0 1389.2,625.6 1390.0,628.7 1390.8,629.4 1391.6,633.4 1392.4,625.1 1393.2,621.9 1394.0,621.3 1394.8,627.8 1395.6,627.4 1396.4,620.0 1397.2,614.8 1398.0,633.9 1398.8,630.3 1399.6,625.2 1400.4,622.7 1401.2,630.6 1402.0,621.0 1402.8,622.9 1403.6,608.8 1404.4,630.6 1405.2,628.4 1406.0,622.2 1406.8,627.7 1407.6,620.7 1408.4,629.7 1409.2,623.8 1410.0,619.8 1410.8,632.8 1411.6,626.3 1412.4,636.2 1413.2,620.8 1414.0,622.2 1414.8,630.0 1415.6,627.6 1416.4,621.3 1417.2,621.8 1418.0,630.9 1418.8,626.1 1419.6,628.5 1420.4,631.4 1421.2,616.1 1422.0,636.6 1422.8,622.2 1423.6,621.1 1424.4,634.6 1425.2,628.9 1426.0,614.4 1426.8,626.7 1427.6,633.2 1428.4,629.4 1429.2,624.6 1430.0,614.8 1430.8,619.2 1431.6,633.9 1432.4,614.9 1433.2,631.6 1434.0,620.7 1434.8,620.7 1435.6,634.1 1436.4,630.3 1437.2,624.6 1438.0,618.7 1438.8,613.2 1439.6,630.3 1440.4,634.7 1441.2,627.2 1442.0,622.9 1442.8,617.8 1443.6,625.5 1444.4,626.5 1445.2,626.7 1446.0,629.5 1446.8,611.9 1447.6,630.7 1448.4,627.8 1449.2,632.4 1450.0,630.5 1450.8,620.9 1451.6,630.8 1452.4,631.6 1453.2,621.4 1454.0,609.1 1454.8,620.2 1455.6,627.2 1456.4,619.8 1457.2,619.8 1458.0,633.0 1458.8,635.6 1459.6,636.0 1460.4,628.3 1461.2,625.8 1462.0,624.2 1462.8,638.3 1463.6,627.5 1464.4,634.8 1465.2,628.3 1466.0,618.1 1466.8,614.2 1467.6,626.4 1468.4,638.5 1469.2,621.7 1470.0,617.8 1470.8,618.6 1471.6,612.8 1472.4,610.5 1473.2,627.0 1474.0,628.9 1474.8,613.6 1475.6,606.8 1476.4,606.1 1477.2,625.2 1478.0,607.1 1478.8,595.2 1479.6,584.0 1480.4,572.8 1481.2,556.0 1482.0,556.0 1482.8,581.2 1483.6,598.0 1484.4,628.6 1485.2,622.4 1486.0,620.5 1486.8,616.0 1487.6,618.5 1488.4,620.4 1489.2,615.7 1490.0,622.7 1490.8,623.8 1491.6,626.9 1492.4,612.7 1493.2,624.8 1494.0,621.4 1494.8,619.8 1495.6,633.7 1496.4,628.0 1497.2,616.0 1498.0,631.9 1498.8,611.5 1499.6,632.2 1500.4,622.4 1501.2,616.3 1502.0,634.3 1502.8,617.5 1503.6,623.8 1504.4,614.1 1505.2,625.3 1506.0,610.0 1506.8,633.8 1507.6,621.4 1508.4,625.6 1509.2,631.4 1510.0,620.5 1510.8,613.5 1511.6,614.5 1512.4,630.0 1513.2,626.1 1514.0,622.7 1514.8,631.3 1515.6,625.1 1516.4,622.0 1517.2,628.2 1518.0,633.5 1518.8,618.3 1519.6,629.9 1520.4,618.8 1521.2,618.3 1522.0,615.1 1522.8,616.7 1523.6,631.0 1524.4,611.7 1525.2,629.8 1526.0,623.2 1526.8,628.9 1527.6,629.3 1528.4,636.2 1529.2,633.0 1530.0,630.4 1530.8,636.1 1531.6,619.2 1532.4,611.7 1533.2,613.9 1534.0,625.1 1534.8,626.5 1535.6,636.4 1536.4,616.6 1537.2,624.7 1538.0,629.3 1538.8,638.2 1539.6,627.5 1540.4,626.9 1541.2,626.1 1542.0,619.4 1542.8,626.6 1543.6,629.5 1544.4,628.7 1545.2,632.4 1546.0,626.9 1546.8,640.5 1547.6,628.9 1548.4,615.3 1549.2,617.8 1550.0,630.8 1550.8,627.3 1551.6,620.5 1552.4,627.7 1553.2,613.0 1554.0,633.2 1554.8,618.2 1555.6,616.3 1556.4,631.7 1557.2,624.5 1558.0,625.7 1558.8,621.9 1559.6,622.0 1560.4,620.2 1561.2,634.1 1562.0,602.9 1562.8,644.3 1563.6,635.8 1564.4,606.2 1565.2,625.2 1566.0,632.5 1566.8,623.3 1567.6,627.7 1568.4,617.7 1569.2,623.0 1570.0,635.3 1570.8,625.2 1571.6,627.4 1572.4,618.8 1573.2,621.4 1574.0,626.2 1574.8,641.0 1575.6,631.5 1576.4,620.1 1577.2,621.7 1578.0,620.3 1578.8,623.4 1579.6,635.9 1580.4,626.0 1581.2,614.2 1582.0,634.9 1582.8,642.0 1583.6,624.3 1584.4,618.4 1585.2,628.9 1586.0,609.4 1586.8,623.1 1587.6,638.1 1588.4,623.8 1589.2,620.1 1590.0,620.1 1590.8,622.0 1591.6,624.9 1592.4,620.3 1593.2,627.0 1594.0,627.0 1594.8,617.1 1595.6,625.0 1596.4,620.4 1597.2,627.6 1598.0,616.1 1598.8,622.0 1599.6,617.3 1600.4,625.6 1601.2,621.0 1602.0,642.2 1602.8,618.3 1603.6,616.9 1604.4,629.9 1605.2,628.1 1606.0,626.8 1606.8,621.0 1607.6,620.6 1608.4,619.2 1609.2,635.0 1610.0,634.7 1610.8,634.1 1611.6,627.2 1612.4,632.6 1613.2,618.7 1614.0,632.9 1614.8,614.6 1615.6,622.1 1616.4,623.4 1617.2,627.8 1618.0,633.2 1618.8,629.9 1619.6,621.9 1620.4,636.9 1621.2,624.0 1622.0,623.1 1622.8,623.6 1623.6,620.2 1624.4,624.5 1625.2,619.0 1626.0,611.5 1626.8,619.0 1627.6,614.0 1628.4,630.2 1629.2,612.5 1630.0,635.0 1630.8,621.3 1631.6,630.5 1632.4,622.0 1633.2,628.4 1634.0,612.8 1634.8,622.2 1635.6,626.3 1636.4,619.4 1637.2,616.9 1638.0,623.1 1638.8,626.3 1639.6,623.1 1640.4,628.0 1641.2,626.9 1642.0,633.9 1642.8,630.5 1643.6,622.4 1644.4,621.3 1645.2,613.9 1646.0,623.9 1646.8,635.6 1647.6,623.5 1648.4,623.5 1649.2,614.9 1650.0,630.2 1650.8,616.4 1651.6,632.8 1652.4,613.0 1653.2,614.8 1654.0,623.9 1654.8,622.1 1655.6,627.4 1656.4,622.5 1657.2,628.4 1658.0,620.7 1658.8,643.1 1659.6,633.0 1660.4,632.1 1661.2,632.6 1662.0,628.4 1662.8,628.7 1663.6,626.2 1664.4,626.5 1665.2,636.4 1666.0,627.7 1666.8,630.6 1667.6,622.2 1668.4,633.6 1669.2,624.6 1670.0,639.9 1670.8,608.9 1671.6,620.4 1672.4,641.4 1673.2,630.6 1674.0,617.3 1674.8,624.1 1675.6,630.5 1676.4,621.3 1677.2,628.7 1678.0,615.1 1678.8,628.9 1679.6,630.6 1680.4,615.7 1681.2,624.5 1682.0,621.6 1682.8,635.2 1683.6,632.8 1684.4,614.9 1685.2,624.8 1686.0,622.4 1686.8,634.3 1687.6,623.0 1688.4,627.3 1689.2,618.6 1690.0,627.7 1690.8,621.3 1691.6,632.7 1692.4,636.4 1693.2,630.7 1694.0,628.2 1694.8,618.8 1695.6,633.6 1696.4,608.0 1697.2,629.8 1698.0,632.2 1698.8,626.0 1699.6,630.4 1700.4,622.5 1701.2,628.1 1702.0,634.7 1702.8,619.9 1703.6,624.1 1704.4,622.8 1705.2,620.9 1706.0,617.5 1706.8,640.1 1707.6,619.2 1708.4,636.8 1709.2,634.1 1710.0,631.3 1710.8,614.8 1711.6,633.1 1712.4,626.1 1713.2,629.5 1714.0,639.4 1714.8,632.3 1715.6,618.4 1716.4,616.1 1717.2,629.2 1718.0,631.7 1718.8,637.6 1719.6,624.1 1720.4,631.6 1721.2,626.2 1722.0,630.8 1722.8,629.7 1723.6,629.8 1724.4,617.1 1725.2,632.6 1726.0,620.5 1726.8,632.4 1727.6,634.0 1728.4,622.7 1729.2,612.7 1730.0,622.3 1730.8,622.2 1731.6,616.0 1732.4,620.6 1733.2,620.6 1734.0,631.4 1734.8,635.3 1735.6,636.7 1736.4,620.5 1737.2,623.5 1738.0,629.4 1738.8,617.0 1739.6,622.0 1740.4,639.8 1741.2,627.6 1742.0,621.6 1742.8,629.8 1743.6,626.4 1744.4,622.3 1745.2,620.5 1746.0,618.7 1746.8,637.4 1747.6,621.7 1748.4,626.3 1749.2,629.4 1750.0,632.9 1750.8,630.0 1751.6,634.1 1752.4,634.5 1753.2,623.1 1754.0,618.0 1754.8,618.1 1755.6,603.3 1756.4,627.5 1757.2,619.3 1758.0,629.5 1758.8,617.2 1759.6,624.1 1760.4,624.5 1761.2,627.6 1762.0,624.4 1762.8,616.3 1763.6,623.3 1764.4,624.0 1765.2,618.6 1766.0,625.4 1766.8,620.5 1767.6,624.7 1768.4,625.7 1769.2,628.1 1770.0,618.5 1770.8,613.6 1771.6,627.5 1772.4,636.8 1773.2,635.5 1774.0,632.6 1774.8,625.7 1775.6,625.4 1776.4,624.4 1777.2,627.7 1778.0,620.3 1778.8,633.6 1779.6,630.3 1780.4,622.0 1781.2,633.2 1782.0,624.4 1782.8,638.5 1783.6,618.6 1784.4,620.7 1785.2,631.7 1786.0,630.1 1786.8,625.4 1787.6,627.1 1788.4,624.0 1789.2,619.8 1790.0,639.2 1790.8,632.5 1791.6,633.5 1792.4,629.8 1793.2,627.8 1794.0,626.9 1794.8,629.6 1795.6,627.2 1796.4,619.1 1797.2,621.3 1798.0,622.8 1798.8,622.7 1799.6,620.7 1800.4,632.9 1801.2,624.7 1802.0,634.5 1802.8,628.1 1803.6,626.5 1804.4,622.7 1805.2,625.6 1806.0,631.1 1806.8,649.5 1807.6,613.2 1808.4,613.6 1809.2,636.0 1810.0,616.2 1810.8,622.1 1811.6,627.2 1812.4,617.4 1813.2,622.1 1814.0,617.8 1814.8,626.3 1815.6,621.4 1816.4,614.4 1817.2,629.8 1818.0,626.2 1818.8,633.5 1819.6,623.6 1820.4,625.5 1821.2,612.9 1822.0,619.3 1822.8,633.5 1823.6,626.4 1824.4,624.5 1825.2,637.8 1826.0,617.7 1826.8,621.9 1827.6,635.6 1828.4,630.2 1829.2,620.2 1830.0,624.6 1830.8,627.3 1831.6,621.7 1832.4,620.8 1833.2,613.4 1834.0,619.9 1834.8,629.0 1835.6,633.2 1836.4,627.6 1837.2,630.2 1838.0,637.4 1838.8,628.4 1839.6,623.1 1840.4,635.0 1841.2,626.8 1842.0,625.0 1842.8,620.5" fill="none" stroke="#f6f6f6" stroke-width="1.1" stroke-linejoin="round"/>
<line x1="1481.4" y1="502" x2="1481.4" y2="653.3" stroke="#f0f040" stroke-width="1.2" stroke-dasharray="1.6 1.2"/>
<line x1="1481.7" y1="556" x2="1481.7" y2="578" stroke="#f4f060" stroke-width="1.8"/>
<circle cx="1481.8" cy="552.7" r="6.1" fill="#fff200"/>
<text x="1352.3" y="509.3" font-size="19.8" text-anchor="end">-10.0</text>
<text x="1352.3" y="539.7" font-size="19.8" text-anchor="end">-20.0</text>
<text x="1352.3" y="570.0" font-size="19.8" text-anchor="end">-30.0</text>
<text x="1352.3" y="600.4" font-size="19.8" text-anchor="end">-40.0</text>
<text x="1352.3" y="630.7" font-size="19.8" text-anchor="end">-50.0</text>
<text x="1352.3" y="661.1" font-size="19.8" text-anchor="end">-60.0</text>
<text x="1384.6" y="670.8" font-size="15" text-anchor="middle">-60</text>
<text x="1416.8" y="692.5" font-size="15" text-anchor="middle">-40</text>
<text x="1448.9" y="670.8" font-size="15" text-anchor="middle">-20</text>
<text x="1481.9" y="692.5" font-size="15" text-anchor="middle">0</text>
<text x="1514.1" y="670.8" font-size="15" text-anchor="middle">20</text>
<text x="1546.2" y="692.5" font-size="15" text-anchor="middle">40</text>
<text x="1578.4" y="670.8" font-size="15" text-anchor="middle">60</text>
<text x="1610.5" y="692.5" font-size="15" text-anchor="middle">80</text>
<text x="1642.7" y="670.8" font-size="15" text-anchor="middle">100</text>
<text x="1674.8" y="692.5" font-size="15" text-anchor="middle">120</text>
<text x="1707.0" y="670.8" font-size="15" text-anchor="middle">140</text>
<text x="1739.2" y="692.5" font-size="15" text-anchor="middle">160</text>
<text x="1771.3" y="670.8" font-size="15" text-anchor="middle">180</text>
<text x="1803.5" y="692.5" font-size="15" text-anchor="middle">200</text>
<text x="1835.6" y="670.8" font-size="15" text-anchor="middle">220</text>
<text x="1603.2" y="720.9" font-size="20" text-anchor="middle">Distance Difference (km)</text>
<text transform="translate(1282.6 577.5) rotate(-90)" font-size="20" text-anchor="middle">Magnitude (dB)</text>
<rect x="1106.6" y="954.8" width="729.8000000000002" height="7.7" fill="#4a4a4a"/>
<rect x="1106.6" y="959.4" width="90.80000000000018" height="1.6" fill="#b4b4b4"/>
<rect x="1745.6" y="959.0" width="90.80000000000018" height="1.6" fill="#bcbcbc"/>
<g stroke="#949494" stroke-width="1" shape-rendering="crispEdges"><line x1="1106.6" y1="829.2" x2="1836.4" y2="829.2"/><line x1="1106.6" y1="862.6" x2="1836.4" y2="862.6"/><line x1="1106.6" y1="896.5" x2="1836.4" y2="896.5"/><line x1="1106.6" y1="929.5" x2="1836.4" y2="929.5"/><line x1="1150.5" y1="794.8" x2="1150.5" y2="962.5"/><line x1="1221.5" y1="794.8" x2="1221.5" y2="962.5"/><line x1="1293.6" y1="794.8" x2="1293.6" y2="962.5"/><line x1="1364.6" y1="794.8" x2="1364.6" y2="962.5"/><line x1="1435.9" y1="794.8" x2="1435.9" y2="962.5"/><line x1="1507.4" y1="794.8" x2="1507.4" y2="962.5"/><line x1="1578.4" y1="794.8" x2="1578.4" y2="962.5"/><line x1="1649.7" y1="794.8" x2="1649.7" y2="962.5"/><line x1="1721.3" y1="794.8" x2="1721.3" y2="962.5"/><line x1="1792.6" y1="794.8" x2="1792.6" y2="962.5"/></g>
<g stroke="#9a9a9c" shape-rendering="crispEdges"><line x1="1106.1" y1="794.8" x2="1837.4" y2="794.8" stroke-width="2"/><line x1="1836.4" y1="794.8" x2="1836.4" y2="963.0" stroke-width="2"/><line x1="1106.1" y1="962.5" x2="1836.4" y2="962.5" stroke-width="1"/></g>
<line x1="1106.6" y1="793.8" x2="1106.6" y2="963.5" stroke="#d02418" stroke-width="1.25"/>
<line x1="1197.4" y1="797.3" x2="1197.4" y2="962.5" stroke="#dcdc30" stroke-width="2.2" stroke-dasharray="2 2.5"/>
<line x1="1334.5" y1="797.3" x2="1334.5" y2="962.5" stroke="#dcdc30" stroke-width="2.2" stroke-dasharray="2 2.5"/>
<line x1="1471.6" y1="797.3" x2="1471.6" y2="962.5" stroke="#dcdc30" stroke-width="2.2" stroke-dasharray="2 2.5"/>
<line x1="1608.4" y1="797.3" x2="1608.4" y2="962.5" stroke="#dcdc30" stroke-width="2.2" stroke-dasharray="2 2.5"/>
<line x1="1745.6" y1="797.3" x2="1745.6" y2="962.5" stroke="#dcdc30" stroke-width="2.2" stroke-dasharray="2 2.5"/>
<line x1="1219.4" y1="942.1" x2="1219.4" y2="962.0" stroke="#b8b8b8" stroke-width="1.2"/>
<line x1="1251.1" y1="833.6" x2="1251.1" y2="962.0" stroke="#f2f2f2" stroke-width="1.7"/>
<line x1="1284.9" y1="840.1" x2="1284.9" y2="962.0" stroke="#f2f2f2" stroke-width="1.7"/>
<line x1="1302.1" y1="893.4" x2="1302.1" y2="962.0" stroke="#f2f2f2" stroke-width="1.7"/>
<line x1="1319.4" y1="855.3" x2="1319.4" y2="962.0" stroke="#f2f2f2" stroke-width="1.7"/>
<line x1="1387.9" y1="900.5" x2="1387.9" y2="962.0" stroke="#f2f2f2" stroke-width="1.7"/>
<line x1="1421.9" y1="858.4" x2="1421.9" y2="962.0" stroke="#f2f2f2" stroke-width="1.7"/>
<line x1="1438.9" y1="845.2" x2="1438.9" y2="962.0" stroke="#f2f2f2" stroke-width="1.7"/>
<line x1="1456.4" y1="813.4" x2="1456.4" y2="962.0" stroke="#f2f2f2" stroke-width="1.7"/>
<line x1="1487.8" y1="956.9" x2="1487.8" y2="962.0" stroke="#b8b8b8" stroke-width="1.2"/>
<line x1="1525.1" y1="846.8" x2="1525.1" y2="962.0" stroke="#f2f2f2" stroke-width="1.7"/>
<line x1="1559.5" y1="880.3" x2="1559.5" y2="962.0" stroke="#f2f2f2" stroke-width="1.7"/>
<line x1="1576.7" y1="807.3" x2="1576.7" y2="962.0" stroke="#f2f2f2" stroke-width="1.7"/>
<line x1="1593.8" y1="833.6" x2="1593.8" y2="962.0" stroke="#f2f2f2" stroke-width="1.7"/>
<line x1="1662.1" y1="854.3" x2="1662.1" y2="962.0" stroke="#f2f2f2" stroke-width="1.7"/>
<line x1="1696.3" y1="795.1" x2="1696.3" y2="962.0" stroke="#f2f2f2" stroke-width="1.7"/>
<line x1="1705.6" y1="949.6" x2="1705.6" y2="962.0" stroke="#b8b8b8" stroke-width="1.2"/>
<line x1="1713.6" y1="795.1" x2="1713.6" y2="962.0" stroke="#f2f2f2" stroke-width="1.7"/>
<line x1="1730.8" y1="879.7" x2="1730.8" y2="962.0" stroke="#f2f2f2" stroke-width="1.7"/>
<text x="1093" y="801.9" font-size="19.6" text-anchor="end">1.0</text>
<text x="1093" y="836.3" font-size="19.6" text-anchor="end">0.8</text>
<text x="1093" y="869.7" font-size="19.6" text-anchor="end">0.6</text>
<text x="1093" y="903.6" font-size="19.6" text-anchor="end">0.4</text>
<text x="1093" y="936.6" font-size="19.6" text-anchor="end">0.2</text>
<text x="1093" y="969.6" font-size="19.6" text-anchor="end">0.0</text>
<text transform="translate(1043 878.5) rotate(-90)" font-size="20" text-anchor="middle">Magnitude</text>
</svg>
<div class="t" style="left:5.66px;top:6.06px;font-size:23.26px;color:#fff;transform:scaleX(0.9452);font-style:italic;">FC0013</div>
<div class="t" style="left:899.73px;top:42.06px;font-size:22.82px;color:#fff;transform:scaleX(0.9924);">Frontend</div>
<div class="t" style="left:12.80px;top:93.05px;font-size:55.20px;color:#ffff00;"><span class="fd">0</span><span class="fp">.</span><span class="fd">2</span><span class="fd">1</span><span class="fd">6</span><span class="fp">.</span><span class="fd">9</span><span class="fd">2</span><span class="fd">8</span><span class="fp">.</span><span class="fd">0</span><span class="fd">0</span><span class="fd">0</span></div>
<div class="t" style="left:394.67px;top:93.06px;font-size:54.22px;color:#ffff00;transform:scaleX(0.9515);">Hz</div>
<div class="t" style="left:12.94px;top:180.05px;font-size:21.08px;color:#ee1414;transform:scaleX(1.0823);">43 ppm Correction</div>
<div class="t" style="left:22.59px;top:241.05px;font-size:24.42px;color:#dcdcdc;transform:scaleX(1.0610);">Connection</div>
<div class="t" style="left:190.57px;top:241.05px;font-size:24.42px;color:#dcdcdc;transform:scaleX(1.0112);">Recorder</div>
<div class="t" style="left:330.36px;top:241.05px;font-size:24.42px;color:#fff;transform:scaleX(0.9634);">FC0013</div>
<div class="t" style="left:22.60px;top:298.06px;font-size:25.58px;color:#fff;transform:scaleX(0.9331);">AGC</div>
<div class="t" style="left:188.10px;top:302.06px;font-size:23.69px;color:#fff;transform:scaleX(1.0816);">On/Off</div>
<div class="t" style="left:21.37px;top:356.05px;font-size:25.58px;color:#fff;transform:scaleX(1.0233);">Gain</div>
<div class="t" style="left:587.97px;top:89.05px;font-size:17.59px;color:#fff;transform:scaleX(0.9668);">Freeze</div>
<div class="t" style="left:695.56px;top:89.05px;font-size:17.59px;color:#fff;transform:scaleX(1.0181);">Gradient</div>
<div class="t" style="left:570.94px;top:150.06px;font-size:18.02px;color:#fff;">Smoothing Level</div>
<div class="t" style="left:570.44px;top:246.06px;font-size:18.31px;color:#fff;transform:scaleX(0.9819);">Zoom X</div>
<div class="t" style="left:570.44px;top:336.06px;font-size:18.31px;color:#fff;transform:scaleX(0.9708);">Zoom Y</div>
<div class="t" style="left:38.56px;top:413.07px;font-size:19.91px;color:#fff;">11A</div>
<div class="t" style="left:163.82px;top:412.06px;font-size:23.69px;color:#fa6a64;transform:scaleX(0.9603);">EId: 9629</div>
<div class="t" style="left:290.15px;top:411.05px;font-size:23.84px;color:#f4f42c;transform:scaleX(0.9402);">MUX3-SYDSJ-BORN</div>
<div class="t" style="left:532.98px;top:411.07px;font-size:23.98px;color:#fff;">2022-03-27</div>
<div class="t" style="left:669.30px;top:411.07px;font-size:23.98px;color:#fff;transform:scaleX(0.9347);width:77.56px;overflow:hidden;">07:07:10</div>
<div class="t" style="left:1797.16px;top:411.05px;font-size:19.48px;color:#fff;transform:scaleX(0.9441);">DAB</div>
<div class="t" style="left:4.93px;top:461.06px;font-size:29.65px;color:#ffff30;transform:scaleX(0.9779);">No Service Selected</div>
<div class="t" style="left:6.54px;top:514.06px;font-size:23.69px;color:#fff;transform:scaleX(0.9531);">Classic.fm</div>
<div class="t" style="left:5.73px;top:552.06px;font-size:23.69px;color:#fff;transform:scaleX(1.0122);">Dansktopkanalen</div>
<div class="t" style="left:6.08px;top:590.07px;font-size:23.69px;color:#fff;transform:scaleX(1.0274);">mix 7.</div>
<div class="t" style="left:5.65px;top:627.06px;font-size:23.69px;color:#fff;transform:scaleX(1.0519);">Mycountry</div>
<div class="t" style="left:6.19px;top:665.05px;font-size:23.69px;color:#fff;transform:scaleX(0.9506);">myROCK.</div>
<div class="t" style="left:5.72px;top:703.06px;font-size:23.69px;color:#fff;transform:scaleX(1.0136);">NOVA.</div>
<div class="t" style="left:5.91px;top:740.06px;font-size:23.69px;color:#fff;transform:scaleX(0.9153);">PLANET ROCK.</div>
<div class="t" style="left:5.76px;top:778.05px;font-size:23.69px;color:#fff;transform:scaleX(0.9926);">Pop FM.</div>
<div class="t" style="left:5.73px;top:816.06px;font-size:23.69px;color:#fff;transform:scaleX(1.0090);">PopFM 80'er.</div>
<div class="t" style="left:5.83px;top:854.06px;font-size:23.69px;color:#fff;transform:scaleX(0.9540);">R. SydhavsØerne</div>
<div class="t" style="left:5.75px;top:892.07px;font-size:23.69px;color:#fff;">Radio 100.</div>
<div class="t" style="left:5.73px;top:930.06px;font-size:23.69px;color:#fff;transform:scaleX(1.0078);">Radio Soft.</div>
<div class="t" style="left:305.49px;top:461.06px;font-size:29.65px;color:#fff;transform:scaleX(0.9775);">Service Quality</div>
<div class="t" style="left:313.40px;top:528.06px;font-size:21.80px;color:#fff;transform:scaleX(0.8801);">SNR (dB)</div>
<div class="t" style="left:511.09px;top:530.05px;font-size:17.30px;color:#fff;transform:scaleX(0.9955);">7,4</div>
<div class="t" style="left:312.46px;top:574.06px;font-size:21.80px;color:#fff;transform:scaleX(0.9019);">FIC (ok %)</div>
<div class="t" style="left:512.95px;top:576.06px;font-size:17.30px;color:#fff;transform:scaleX(1.0492);">99</div>
<div class="t" style="left:312.47px;top:620.06px;font-size:21.80px;color:#fff;transform:scaleX(0.8974);">RS (ok %)</div>
<div class="t" style="left:312.34px;top:666.06px;font-size:21.80px;color:#fff;transform:scaleX(0.9755);">Null Symbol</div>
<div class="t" style="left:313.36px;top:712.06px;font-size:21.80px;color:#fff;transform:scaleX(0.9377);">SymbolTime (ms)</div>
<div class="t" style="left:506.16px;top:715.05px;font-size:17.30px;color:#fff;">0,33</div>
<div class="t" style="left:312.42px;top:758.06px;font-size:21.80px;color:#fff;transform:scaleX(0.9286);">FrameTime (ms)</div>
<div class="t" style="left:505.88px;top:761.05px;font-size:17.30px;color:#fff;transform:scaleX(1.0108);">95,8</div>
<div class="t" style="left:655.00px;top:473.06px;font-size:25.00px;color:#e2deda;transform:scaleX(0.9300);">AAC</div>
<div class="t" style="left:838.09px;top:473.06px;font-size:25.00px;color:#e2deda;transform:scaleX(1.0356);">Options</div>
<div class="t" style="left:630.28px;top:522.06px;font-size:25.00px;color:#e2deda;transform:scaleX(0.9245);">Sync</div>
<div class="t" style="left:769.63px;top:522.06px;font-size:25.00px;color:#fff;transform:scaleX(0.9542);">TII</div>
<div class="t" style="left:885.20px;top:522.06px;font-size:25.00px;color:#e2deda;transform:scaleX(1.0457);">Audio</div>
<div class="t" style="left:595.64px;top:626.06px;font-size:21.80px;color:#fff;transform:scaleX(1.0346);">Pattern</div>
<div class="t" style="left:696.14px;top:626.06px;font-size:21.80px;color:#fff;transform:scaleX(1.0926);">MainId</div>
<div class="t" style="left:796.61px;top:626.06px;font-size:21.80px;color:#fff;transform:scaleX(1.0060);">SubId</div>
<div class="t" style="left:883.59px;top:626.06px;font-size:21.80px;color:#fff;transform:scaleX(1.0396);">Strength</div>
<div class="t" style="left:598.87px;top:672.05px;font-size:20.78px;color:#fff;transform:scaleX(0.9752);">0x17</div>
<div class="t" style="left:700.70px;top:672.05px;font-size:20.78px;color:#fff;">1</div>
<div class="t" style="left:798.43px;top:672.05px;font-size:20.78px;color:#fff;">2</div>
<div class="t" style="left:886.27px;top:672.05px;font-size:20.78px;color:#fff;transform:scaleX(0.9676);">0.88</div>
<div class="t" style="left:1281.30px;top:455.06px;font-size:22.53px;color:#fff;transform:scaleX(0.9515);">Channel Impulse Response (CIR)</div>
<div class="t" style="left:1389.57px;top:748.05px;font-size:22.53px;color:#fff;transform:scaleX(0.9320);">TII Carriers</div>
<div class="t" style="left:1030.58px;top:502.05px;font-size:17.59px;color:#fff;transform:scaleX(0.9630);">Freeze</div>
<div class="t" style="left:1137.86px;top:502.05px;font-size:17.59px;color:#fff;transform:scaleX(1.0241);">Gradient</div>
<div class="t" style="left:1013.14px;top:562.06px;font-size:18.02px;color:#fff;">Smoothing Level</div>
<div class="t" style="left:1013.14px;top:643.06px;font-size:18.31px;color:#fff;transform:scaleX(0.9756);">Zoom X</div>
<div class="t" style="left:1013.15px;top:718.07px;font-size:18.31px;color:#fff;transform:scaleX(0.9677);">Zoom Y</div>
</body></html>
